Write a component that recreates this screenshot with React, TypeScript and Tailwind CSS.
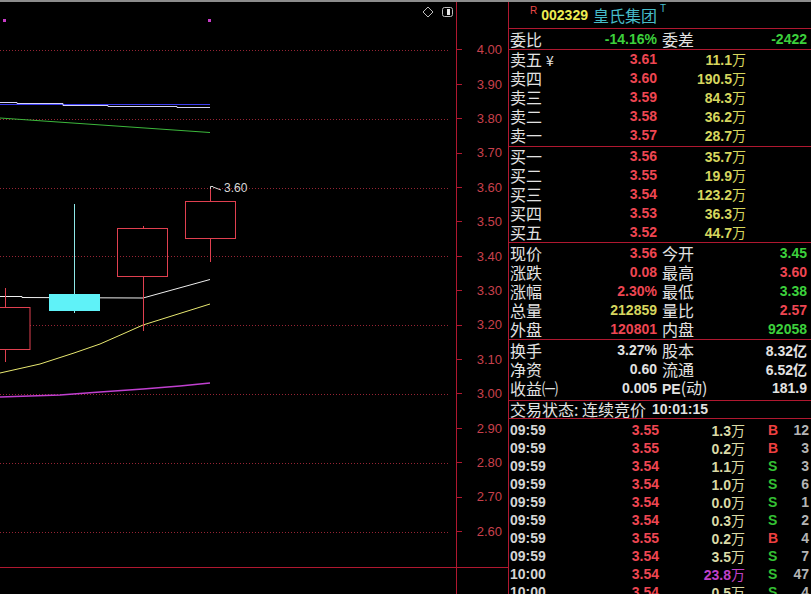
const LINE = "border-[#b01830]";
const NUM = "font-['Liberation_Sans','Noto_Sans_CJK_SC',sans-serif] font-bold text-[14px]";
const CJK = "font-['Noto_Sans_CJK_SC',sans-serif] text-[16px] leading-[19px]";

const RED = "text-[#ee4652]";
const GREEN = "text-[#3cd03c]";
const YELLOW = "text-[#d6d65e]";
const WHITE = "text-[#e2e2e2]";

const axisLabels = ["4.00", "3.90", "3.80", "3.70", "3.60", "3.50", "3.40", "3.30", "3.20", "3.10", "3.00", "2.90", "2.80", "2.70", "2.60"];

const sells = [
  ["卖五", "3.61", "11.1"],
  ["卖四", "3.60", "190.5"],
  ["卖三", "3.59", "84.3"],
  ["卖二", "3.58", "36.2"],
  ["卖一", "3.57", "28.7"],
];
const buys = [
  ["买一", "3.56", "35.7"],
  ["买二", "3.55", "19.9"],
  ["买三", "3.54", "123.2"],
  ["买四", "3.53", "36.3"],
  ["买五", "3.52", "44.7"],
];

const stats = [
  ["现价", "3.56", RED, "今开", "3.45", GREEN],
  ["涨跌", "0.08", RED, "最高", "3.60", RED],
  ["涨幅", "2.30%", RED, "最低", "3.38", GREEN],
  ["总量", "212859", YELLOW, "量比", "2.57", RED],
  ["外盘", "120801", RED, "内盘", "92058", GREEN],
];

const trades = [
  ["09:59", "3.55", "1.3", "B", "12"],
  ["09:59", "3.55", "0.2", "B", "3"],
  ["09:59", "3.54", "1.1", "S", "3"],
  ["09:59", "3.54", "1.0", "S", "6"],
  ["09:59", "3.54", "0.0", "S", "1"],
  ["09:59", "3.54", "0.3", "S", "2"],
  ["09:59", "3.55", "0.2", "B", "4"],
  ["09:59", "3.54", "3.5", "S", "7"],
  ["10:00", "3.54", "23.8", "S", "47"],
  ["10:00", "3.54", "0.5", "S", "4"],
];

function Chart() {
  const y = (p: number) => Math.round(50 + (4 - p) * 344) + 0.5;
  const grid = [4.0, 3.8, 3.6, 3.4, 3.2, 3.0, 2.8, 2.6];
  const red = "#e04050";
  return (
    <svg width="456" height="565" viewBox="0 2 456 565" className="block">
      {grid.map((p) => (
        <line key={p} x1="0" x2="448" y1={y(p)} y2={y(p)} stroke="#962434" strokeDasharray="1 2" />
      ))}
      {/* top right icons */}
      <path d="M428 7 L433 12 L428 17 L423 12 Z" fill="none" stroke="#bdbdbd" />
      <rect x="442.5" y="7.5" width="10" height="9" rx="2" fill="none" stroke="#bdbdbd" />
      <rect x="447" y="9" width="3" height="6" fill="#e8e8e8" />
      <rect x="3" y="19" width="3" height="3" fill="#c83cc8" />
      <rect x="208" y="19" width="3" height="3" fill="#c83cc8" />

      {/* moving averages */}
      <polyline points="0,104.5 210,104.5" fill="none" stroke="#3c3cf0" />
      <polyline points="0,102.5 17,102.5 17,103.5 63,103.5 63,105.5 108,105.5 108,106.5 177,106.5 177,107.5 210,107.5" fill="none" stroke="#d4d4f4" />
      <polyline points="0,118 210,132.5" fill="none" stroke="#3cb83c" />
      <polyline points="0,296.5 22,296.5 22,297.5 143,298 210,279.5" fill="none" stroke="#eeeeee" />
      <polyline points="0,373 40,364 74,353 100,344 125,333 143,325 210,304" fill="none" stroke="#e8e870" />
      <polyline points="0,397 60,395 100,392 143,389 180,386 210,383" fill="none" stroke="#c040d0" strokeWidth="1.3" />

      {/* candles */}
      <line x1="5.5" x2="5.5" y1="288" y2="307" stroke={red} />
      <line x1="5.5" x2="5.5" y1="350" y2="362" stroke={red} />
      <rect x="-20" y="307.5" width="50" height="42" fill="#000" stroke={red} />

      <line x1="74.5" x2="74.5" y1="204" y2="313" stroke="#8ee8e8" />
      <rect x="49" y="294" width="51" height="17" fill="#5ff2f8" />

      <line x1="143.5" x2="143.5" y1="226" y2="228" stroke={red} />
      <line x1="143.5" x2="143.5" y1="277" y2="331" stroke={red} />
      <rect x="117.5" y="228.5" width="50" height="48" fill="none" stroke={red} />

      <line x1="210.5" x2="210.5" y1="187" y2="201" stroke={red} />
      <line x1="210.5" x2="210.5" y1="239" y2="262" stroke={red} />
      <rect x="185.5" y="201.5" width="50" height="37" fill="none" stroke={red} />

      <path d="M210.5 189 V186.5 H213 M213 187 L221 190" fill="none" stroke="#d8d8d8" />
      <text x="224" y="191.5" fill="#d8d8d8" fontSize="12" fontFamily="Liberation Sans, sans-serif">
        3.60
      </text>
    </svg>
  );
}

function Wan({ v, unit = "万", color }: { v: string; unit?: string; color: string }) {
  return (
    <span className={color}>
      <span className={NUM}>{v}</span>
      <span className="font-['Noto_Sans_CJK_SC',sans-serif] text-[14px]">{unit}</span>
    </span>
  );
}

function DepthRow({ label, price, vol, yen }: { label: string; price: string; vol: string; yen?: boolean }) {
  return (
    <div className="h-[19px] flex items-center leading-[19px]">
      <div className={`w-[70px] ${CJK} ${WHITE}`}>
        {label}
        {yen && <span className="ml-[4px] text-[14px]">¥</span>}
      </div>
      <div className={`w-[77px] text-right ${NUM} ${RED}`}>{price}</div>
      <div className="w-[89px] text-right">
        <Wan v={vol} color={YELLOW} />
      </div>
    </div>
  );
}

function StatRow({ l1, v1, c1, l2, v2, c2 }: { l1: React.ReactNode; v1: React.ReactNode; c1: string; l2: React.ReactNode; v2: React.ReactNode; c2: string }) {
  return (
    <div className="h-[19px] flex items-center leading-[19px]">
      <div className={`w-[70px] ${CJK} ${WHITE}`}>{l1}</div>
      <div className={`w-[77px] text-right ${NUM} ${c1}`}>{v1}</div>
      <div className={`flex-1 pl-[5px] ${CJK} ${WHITE}`}>{l2}</div>
      <div className={`pr-[4px] text-right ${NUM} ${c2}`}>{v2}</div>
    </div>
  );
}

function Panel() {
  return (
    <div className={`w-[303px] h-[592px] border-l ${LINE} flex flex-col pl-[1px] overflow-hidden`}>
      <div className={`h-[27px] shrink-0 -ml-[1px] border-b ${LINE} flex items-center pl-[21px]`}>
        <span className="text-[10px] leading-[12px] text-[#e84848] self-start mt-[3px] font-['Liberation_Sans',sans-serif]">R</span>
        <span className={`ml-[4px] ${NUM} text-[#ecec52]`}>002329</span>
        <span className={`ml-[5px] ${CJK} text-[#46bcc8]`}>皇氏集团</span>
        <span className="ml-[3px] text-[10px] leading-[12px] text-[#46bcc8] self-start mt-[1px] font-['Liberation_Sans',sans-serif]">T</span>
      </div>
      <div className={`h-[21px] shrink-0 -ml-[1px] pl-[1px] border-b ${LINE} flex items-center leading-[19px]`}>
        <div className={`w-[70px] ${CJK} ${WHITE}`}>委比</div>
        <div className={`w-[77px] text-right ${NUM} ${GREEN}`}>-14.16%</div>
        <div className={`flex-1 pl-[5px] ${CJK} ${WHITE}`}>委差</div>
        <div className={`pr-[4px] ${NUM} ${GREEN}`}>-2422</div>
      </div>
      <div className={`shrink-0 -ml-[1px] pl-[1px] pb-[1px] border-b ${LINE}`}>
        {sells.map((r, i) => (
          <DepthRow key={r[0]} label={r[0]} price={r[1]} vol={r[2]} yen={i === 0} />
        ))}
      </div>
      <div className={`shrink-0 -ml-[1px] pl-[1px] border-b ${LINE}`}>
        {buys.map((r) => (
          <DepthRow key={r[0]} label={r[0]} price={r[1]} vol={r[2]} />
        ))}
      </div>
      <div className={`shrink-0 -ml-[1px] pl-[1px] pt-[1px] border-b ${LINE}`}>
        {stats.map((r) => (
          <StatRow key={r[0]} l1={r[0]} v1={r[1]} c1={r[2]} l2={r[3]} v2={r[4]} c2={r[5]} />
        ))}
      </div>
      <div className={`shrink-0 -ml-[1px] pl-[1px] pt-[1px] pb-[2px] border-b ${LINE}`}>
        <StatRow l1="换手" v1="3.27%" c1={WHITE} l2="股本" v2={<Wan v="8.32" unit="亿" color={WHITE} />} c2={WHITE} />
        <StatRow l1="净资" v1="0.60" c1={WHITE} l2="流通" v2={<Wan v="6.52" unit="亿" color={WHITE} />} c2={WHITE} />
        <StatRow l1="收益㈠" v1="0.005" c1={WHITE} l2={<span><span className={NUM}>PE</span>(动)</span>} v2="181.9" c2={WHITE} />
      </div>
      <div className={`h-[18px] shrink-0 -ml-[1px] pl-[1px] border-b ${LINE} flex items-center leading-[17px] ${WHITE}`}>
        <span className={CJK}>交易状态: 连续竞价</span>
        <span className={`ml-[6px] ${NUM}`}>10:01:15</span>
      </div>
      <div className="shrink-0 pt-[2px]">
        {trades.map((t, i) => (
          <div key={i} className="h-[18px] flex items-center leading-[18px]">
            <div className={`w-[60px] ${NUM} text-[#d4d4d4]`}>{t[0]}</div>
            <div className={`w-[89px] text-right ${NUM} ${RED}`}>{t[1]}</div>
            <div className="w-[86px] text-right">
              <Wan v={t[2]} color={t[2] === "23.8" ? "text-[#c040c8]" : "text-[#dadaa6]"} />
            </div>
            <div className={`ml-[23px] w-[12px] ${NUM} ${t[3] === "B" ? "text-[#ee4040]" : "text-[#34c034]"}`}>{t[3]}</div>
            <div className={`flex-1 text-right pr-[2px] ${NUM} text-[#b4b4b4]`}>{t[4]}</div>
          </div>
        ))}
      </div>
    </div>
  );
}

export default function App() {
  return (
    <div className="w-[811px] h-[594px] bg-black border-t-2 border-[#8c8c8c] flex overflow-hidden">
      <div className="w-[508px] flex flex-col">
        <div className="h-[565px] shrink-0 flex">
          <div className="w-[456px]">
            <Chart />
          </div>
          <div className={`w-[52px] border-l ${LINE} pt-[30.8px] flex flex-col`}>
            {axisLabels.map((l) => (
              <div key={l} className="h-[34.4px] shrink-0 flex items-center">
                <div className="w-[5px] h-px bg-[#b01830]" />
                <div className="flex-1 text-right pr-[6px] text-[13px] text-[#c8404c] font-['Liberation_Sans',sans-serif]">{l}</div>
              </div>
            ))}
          </div>
        </div>
        <div className={`flex-1 border-t ${LINE} flex`}>
          <div className="w-[456px]" />
          <div className={`flex-1 border-l ${LINE}`} />
        </div>
      </div>
      <Panel />
    </div>
  );
}
